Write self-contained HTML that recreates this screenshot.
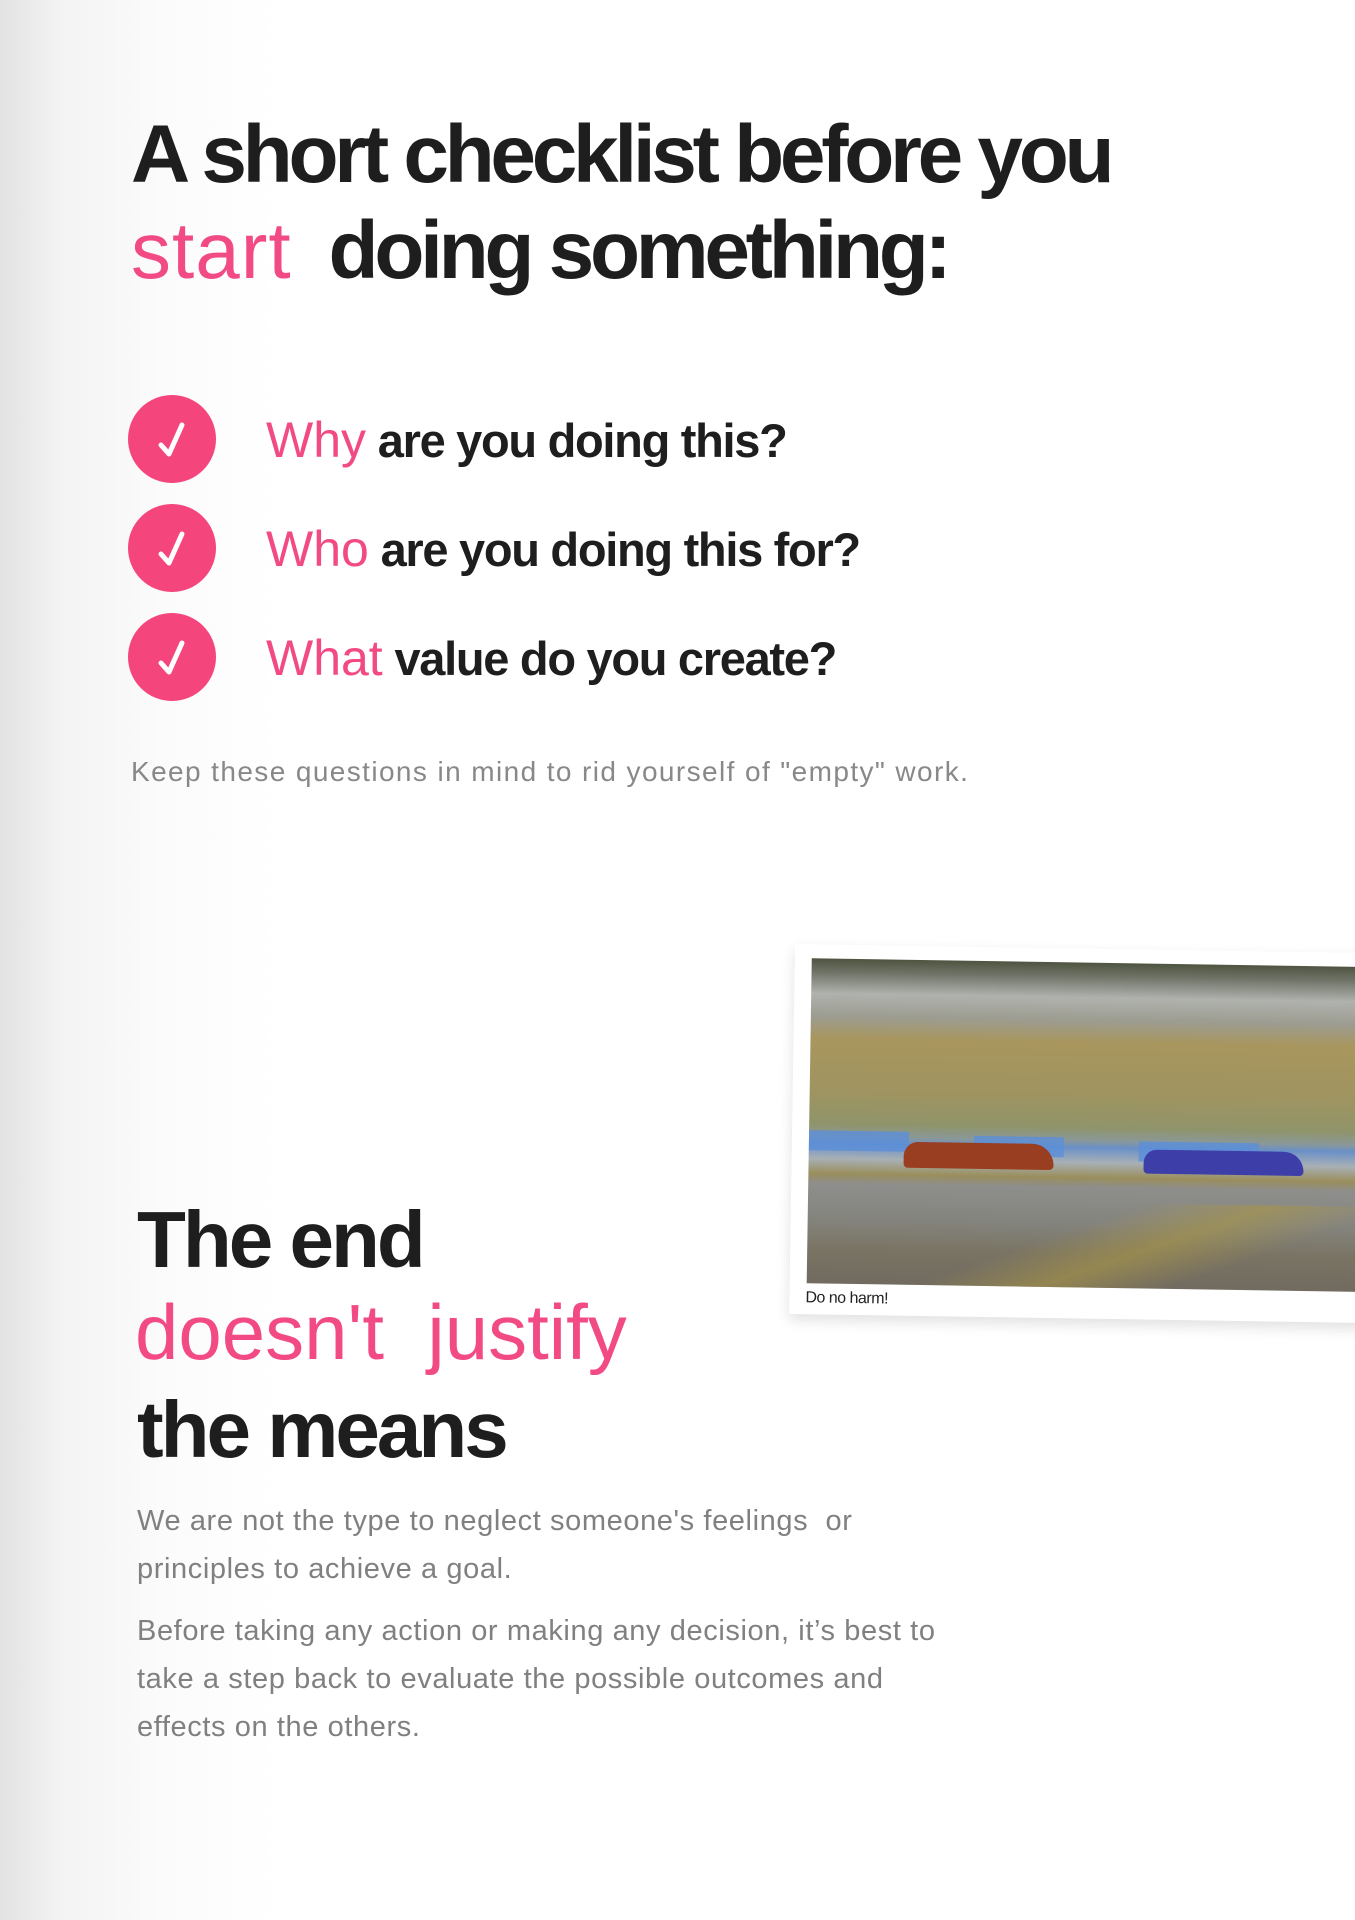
<!DOCTYPE html>
<html><head><meta charset="utf-8"><style>
html,body{margin:0;padding:0}
body{width:1355px;height:1920px;position:relative;overflow:hidden;background:linear-gradient(90deg,#e2e2e2 0px,#f3f3f3 60px,#fbfbfb 160px,#fff 280px);font-family:"Liberation Sans",sans-serif;color:#1e1e1e}
.t{position:absolute;white-space:nowrap;line-height:1}
.h{font-weight:bold;letter-spacing:-3.5px}
.p{color:#f24a85;font-weight:normal;letter-spacing:0}
.c{position:absolute;width:88px;height:88px;border-radius:50%;background:#f4457d}
.c svg{position:absolute;left:0;top:0}
.g{color:#808080;font-size:29px;letter-spacing:0.6px}
</style></head><body>
<div class="t h" style="left:131px;top:114px;font-size:82px;letter-spacing:-4.3px">A short checklist before you</div>
<div class="t h" style="left:131px;top:210px;font-size:82px;letter-spacing:-4.3px"><span class="p" style="font-size:80px;letter-spacing:1px">start</span>&nbsp; doing something:</div>

<div class="c" style="left:128px;top:395px"><svg width="88" height="88"><path d="M33 50 L41 59 L54 30" fill="none" stroke="#fff" stroke-width="5" stroke-linecap="round" stroke-linejoin="round"/></svg></div>
<div class="c" style="left:128px;top:504px"><svg width="88" height="88"><path d="M33 50 L41 59 L54 30" fill="none" stroke="#fff" stroke-width="5" stroke-linecap="round" stroke-linejoin="round"/></svg></div>
<div class="c" style="left:128px;top:613px"><svg width="88" height="88"><path d="M33 50 L41 59 L54 30" fill="none" stroke="#fff" stroke-width="5" stroke-linecap="round" stroke-linejoin="round"/></svg></div>

<div class="t" style="left:266px;top:415px;font-size:47px;font-weight:bold;letter-spacing:-1.3px"><span class="p" style="font-size:50px">Why</span> are you doing this?</div>
<div class="t" style="left:266px;top:524px;font-size:47px;font-weight:bold;letter-spacing:-1.3px"><span class="p" style="font-size:50px">Who</span> are you doing this for?</div>
<div class="t" style="left:266px;top:633px;font-size:47px;font-weight:bold;letter-spacing:-1.3px"><span class="p" style="font-size:50px">What</span> value do you create?</div>

<div class="t" style="left:131px;top:758px;font-size:28px;color:#888;letter-spacing:1.4px">Keep these questions in mind to rid yourself of "empty" work.</div>

<div style="position:absolute;left:795px;top:944px;width:620px;height:370px;background:#fff;box-shadow:0 6px 14px rgba(0,0,0,0.12);transform:rotate(0.9deg);transform-origin:0 0">
 <div style="position:absolute;left:17px;top:14px;width:600px;height:325px;overflow:hidden;background:linear-gradient(180deg,#4e5440 0px,#707468 14px,#b0b2ae 35px,#9c9c90 58px,#a8965e 80px,#a09460 130px,#90946a 165px,#8a9898 178px,#6a90c8 185px,#a8b0b6 200px,#9a8e5c 215px,#8e8e8c 225px,#84847e 260px,#7a7464 290px,#716b60 325px)">
  <div style="position:absolute;left:0;top:172px;width:100px;height:20px;background:#5b8fd8;opacity:.8"></div>
  <div style="position:absolute;left:165px;top:175px;width:90px;height:20px;background:#5b8fd8;opacity:.8"></div>
  <div style="position:absolute;left:330px;top:178px;width:120px;height:20px;background:#5b8fd8;opacity:.8"></div>
  <div style="position:absolute;left:95px;top:182px;width:150px;height:26px;background:#9a3e22;border-radius:20px 30px 6px 6px"></div>
  <div style="position:absolute;left:335px;top:186px;width:160px;height:24px;background:#3e3ea8;border-radius:20px 30px 6px 6px"></div>
  <div style="position:absolute;left:0;top:240px;width:600px;height:90px;background:linear-gradient(160deg,transparent 40%,rgba(170,150,70,.6) 55%,transparent 70%)"></div>
 </div>
 <div style="position:absolute;left:16px;top:345px;font-size:16px;color:#222;letter-spacing:-0.5px">Do no harm!</div>
</div>

<div class="t h" style="left:137px;top:1200px;font-size:80px;letter-spacing:-3px">The end</div>
<div class="t p" style="left:135px;top:1293px;font-size:78px;letter-spacing:0px">doesn't&nbsp; justify</div>
<div class="t h" style="left:137px;top:1390px;font-size:80px;letter-spacing:-3px">the means</div>

<div class="t g" style="left:137px;top:1507px">We are not the type to neglect someone's feelings&nbsp; or</div>
<div class="t g" style="left:137px;top:1555px">principles to achieve a goal.</div>
<div class="t g" style="left:137px;top:1617px">Before taking any action or making any decision, it’s best to</div>
<div class="t g" style="left:137px;top:1665px">take a step back to evaluate the possible outcomes and</div>
<div class="t g" style="left:137px;top:1713px">effects on the others.</div>
</body></html>
